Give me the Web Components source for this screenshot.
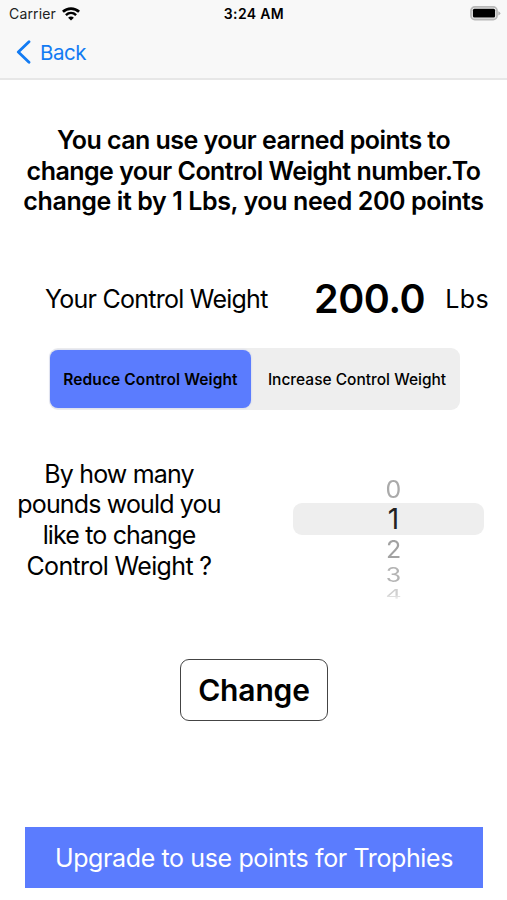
<!DOCTYPE html>
<html lang="en">
<head>
<meta charset="utf-8">
<title>Control Weight</title>
<style>
  body {
    margin: 0;
    background: #fff;
    color: #000;
    font-family: Inter, "Liberation Sans", sans-serif;
  }
</style>
</head>
<body>
<weight-screen></weight-screen>
<script>
class StatusBar extends HTMLElement {
  constructor() {
    super();
    this.attachShadow({ mode: "open" });
    this.shadowRoot.innerHTML = `
      <style>
        :host {
          display: grid;
          grid-template-columns: 1fr auto 1fr;
          align-items: center;
          height: 27px;
          padding: 0 6px 0 9px;
          box-sizing: border-box;
          font-size: 14px;
          line-height: 27px;
        }
        .left { display: flex; align-items: center; gap: 6px; color: #222; }
        .carrier { letter-spacing: 0.15px; }
        .time { font-weight: 600; letter-spacing: 0.35px; margin-right: 2px; }
        .battery { justify-self: end; }
        svg { display: block; }
      </style>
      <div class="left">
        <span class="carrier"><slot name="carrier"></slot></span>
        <svg width="18" height="14" viewBox="0 0 18 14">
          <path d="M0.900 4.800C5.400 0.500 12.600 0.500 17.100 4.800" fill="none" stroke="#000" stroke-width="2.700"/>
          <path d="M3.900 8.100C6.900 5.300 11.100 5.300 14.100 8.100" fill="none" stroke="#000" stroke-width="2.500"/>
          <path d="M9 13.600L6.100 10.700C7.800 9.200 10.200 9.200 11.900 10.700Z"/>
        </svg>
      </div>
      <span class="time"><slot name="time"></slot></span>
      <svg class="battery" width="31" height="15" viewBox="0 0 31 15">
        <rect x="1" y="0.900" width="26" height="12.600" rx="3.800" fill="#f0f0f0" stroke="#b8b8b8" stroke-width="1.800"/>
        <rect x="2.900" y="2.800" width="22.200" height="8.800" rx="1.500"/>
        <path d="M28.300 5.200Q30.300 6 30.300 7.300Q30.300 8.600 28.300 9.400Z" fill="#b2b2b2"/>
      </svg>
    `;
  }
}

class NavBar extends HTMLElement {
  constructor() {
    super();
    this.attachShadow({ mode: "open" });
    this.shadowRoot.innerHTML = `
      <style>
        :host {
          display: flex;
          align-items: center;
          gap: 9px;
          height: 53px;
          box-sizing: border-box;
          padding: 0 16px 1px;
          border-bottom: 2px solid #e7e7e7;
          color: #127bf3;
          font-size: 20.5px;
          letter-spacing: -0.5px;
        }
        svg { display: block; }
      </style>
      <svg width="15" height="24" viewBox="0 0 15 24">
        <path d="M13 1.700L2.300 12L13 22.300" fill="none" stroke="currentColor" stroke-width="2.800" stroke-linecap="round" stroke-linejoin="round"/>
      </svg>
      <span><slot></slot></span>
    `;
  }
}

class WeightReadout extends HTMLElement {
  constructor() {
    super();
    this.attachShadow({ mode: "open" });
    this.shadowRoot.innerHTML = `
      <style>
        :host {
          display: flex;
          align-items: center;
          height: 50px;
          padding: 0 18px 0 45px;
          font-size: 25px;
          white-space: nowrap;
        }
        .label { flex: 1; letter-spacing: -0.75px; }
        .value { font-size: 39.5px; font-weight: 600; letter-spacing: -0.4px; margin-right: 20px; }
        .unit { padding-top: 1px; letter-spacing: 0.4px; }
      </style>
      <span class="label"><slot></slot></span>
      <span class="value">${this.getAttribute("value")}</span>
      <span class="unit">${this.getAttribute("unit")}</span>
    `;
  }
}

class SegmentedControl extends HTMLElement {
  constructor() {
    super();
    this.attachShadow({ mode: "open" });
    this.shadowRoot.innerHTML = `
      <style>
        :host {
          display: grid;
          grid-template-columns: 201px 1fr;
          gap: 4px;
          width: 411px;
          height: 62px;
          box-sizing: border-box;
          padding: 2px 1px;
          border-radius: 9px;
          background: #eee;
        }
        ::slotted(*) {
          display: flex;
          align-items: center;
          justify-content: center;
          padding-top: 1px;
          border-radius: 8px;
          font-size: 15.5px;
          font-weight: 500;
          white-space: nowrap;
        }
        ::slotted(.selected) {
          background: #5b7cfe;
          font-weight: 600;
          box-shadow: 0 0 2px #b9c4ee;
        }
      </style>
      <slot></slot>
    `;
  }
}

class PickerWheel extends HTMLElement {
  constructor() {
    super();
    this.attachShadow({ mode: "open" });
    this.shadowRoot.innerHTML = `
      <style>
        :host {
          display: flex;
          flex-direction: column;
          align-items: stretch;
          width: 191px;
          text-align: center;
        }
        div { display: flex; align-items: center; justify-content: center; padding-left: 10px; }
        span { display: block; font-size: 25px; line-height: 30px; }
        .prev { height: 27px; color: #aaa; }
        .prev span { transform: scaleY(0.95); }
        .current { height: 32px; border-radius: 9px; background: #eee; color: #222; }
        .current span { font-size: 28px; }
        .next { height: 28px; color: #a2a2a2; }
        .next span { transform: scaleY(0.95); }
        .far { height: 24px; color: #b4b4b4; }
        .far span { transform: scaleY(0.78); }
        .last { height: 14px; color: #d0d0d0; }
        .last span {
          transform: scaleY(0.55);
          -webkit-mask-image: linear-gradient(#000 55%, transparent 90%);
          mask-image: linear-gradient(#000 55%, transparent 90%);
        }
      </style>
    `;
    const rows = ["prev", "current", "next", "far", "last"];
    this.getAttribute("values").split(",").forEach((value, i) => {
      const row = document.createElement("div");
      row.className = rows[i];
      row.innerHTML = `<span>${value}</span>`;
      this.shadowRoot.appendChild(row);
    });
  }
}

class ActionButton extends HTMLElement {
  constructor() {
    super();
    this.attachShadow({ mode: "open" });
    this.shadowRoot.innerHTML = `
      <style>
        :host { display: block; width: 148px; height: 62px; }
        :host([banner]) { width: 458px; height: 61px; }
        button {
          display: block;
          width: 100%;
          height: 100%;
          padding: 0;
          border: 1.500px solid #444;
          border-radius: 9px;
          background: #fff;
          color: #000;
          font: 600 30px Inter, "Liberation Sans", sans-serif;
          letter-spacing: -0.15px;
          white-space: nowrap;
        }
        :host([banner]) button {
          padding-top: 2px;
          border: 0;
          border-radius: 0;
          background: #5b7cfe;
          color: #fff;
          font-size: 25px;
          font-weight: 400;
          letter-spacing: -0.38px;
        }
      </style>
      <button><slot></slot></button>
    `;
  }
}

class WeightScreen extends HTMLElement {
  constructor() {
    super();
    this.attachShadow({ mode: "open" });
    this.shadowRoot.innerHTML = `
      <style>
        :host {
          display: flex;
          flex-direction: column;
          width: 507px;
          height: 900px;
          overflow: hidden;
        }
        header { background: #f8f8f8; }
        h1 {
          margin: 45px 0 0;
          font-size: 25px;
          line-height: 30.600px;
          font-weight: 600;
          letter-spacing: -0.4px;
          text-align: center;
          white-space: nowrap;
        }
        .tight { letter-spacing: -0.53px; }
        weight-readout { margin-top: 57px; }
        segmented-control { margin: 24px 0 0 49px; }
        .reduce { letter-spacing: 0.1px; }
        .increase { letter-spacing: 0; }
        .amount { display: flex; margin: 49px 23px 0 15px; justify-content: space-between; }
        .amount p {
          width: 208px;
          margin: 0;
          font-size: 25px;
          line-height: 30.600px;
          letter-spacing: -0.85px;
          text-align: center;
          white-space: nowrap;
        }
        .amount .last { letter-spacing: -0.65px; }
        picker-wheel { margin-top: 17px; }
        .change { margin: 58px 0 0 180px; }
        .upgrade { margin: 106px 0 0 25px; }
      </style>
      <header>
        <status-bar><span slot="carrier">Carrier</span><span slot="time">3:24 AM</span></status-bar>
        <nav-bar>Back</nav-bar>
      </header>
      <h1><span class="tight">You can use your earned points to<br>change your Control Weight number.To</span><br>change it by 1 Lbs, you need 200 points</h1>
      <weight-readout value="200.0" unit="Lbs">Your Control Weight</weight-readout>
      <segmented-control>
        <span class="reduce selected">Reduce Control Weight</span>
        <span class="increase">Increase Control Weight</span>
      </segmented-control>
      <section class="amount">
        <p>By how many<br>pounds would you<br>like to change<br><span class="last">Control Weight ?</span></p>
        <picker-wheel values="0,1,2,3,4"></picker-wheel>
      </section>
      <action-button class="change">Change</action-button>
      <action-button class="upgrade" banner>Upgrade to use points for Trophies</action-button>
    `;
  }
}

customElements.define("status-bar", StatusBar);
customElements.define("nav-bar", NavBar);
customElements.define("weight-readout", WeightReadout);
customElements.define("segmented-control", SegmentedControl);
customElements.define("picker-wheel", PickerWheel);
customElements.define("action-button", ActionButton);
customElements.define("weight-screen", WeightScreen);
</script>
</body>
</html>
